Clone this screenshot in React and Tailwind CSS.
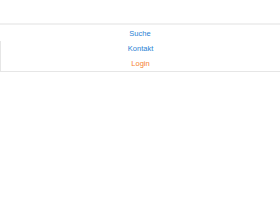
import React from 'react';

const App = () => {
  return (
    <div className="w-[280px] h-[210px] bg-white" style={{ fontFamily: '"Liberation Sans", Arial, sans-serif' }}>
      <div className="h-[23px]" />
      <div className="border-t-2 border-[#f0f0f0]">
        <div className="h-[16px] pt-px flex items-center justify-center text-[7.5px] text-[#2a7fd4]">Suche</div>
        <div className="border-l border-b border-[#e6e6e6]">
          <div className="h-[15px] flex items-center justify-center text-[7.5px] text-[#2a7fd4]">Kontakt</div>
          <div className="h-[15px] flex items-center justify-center text-[7.5px] text-[#f5822e]">Login</div>
        </div>
      </div>
    </div>
  );
};

export default App;
